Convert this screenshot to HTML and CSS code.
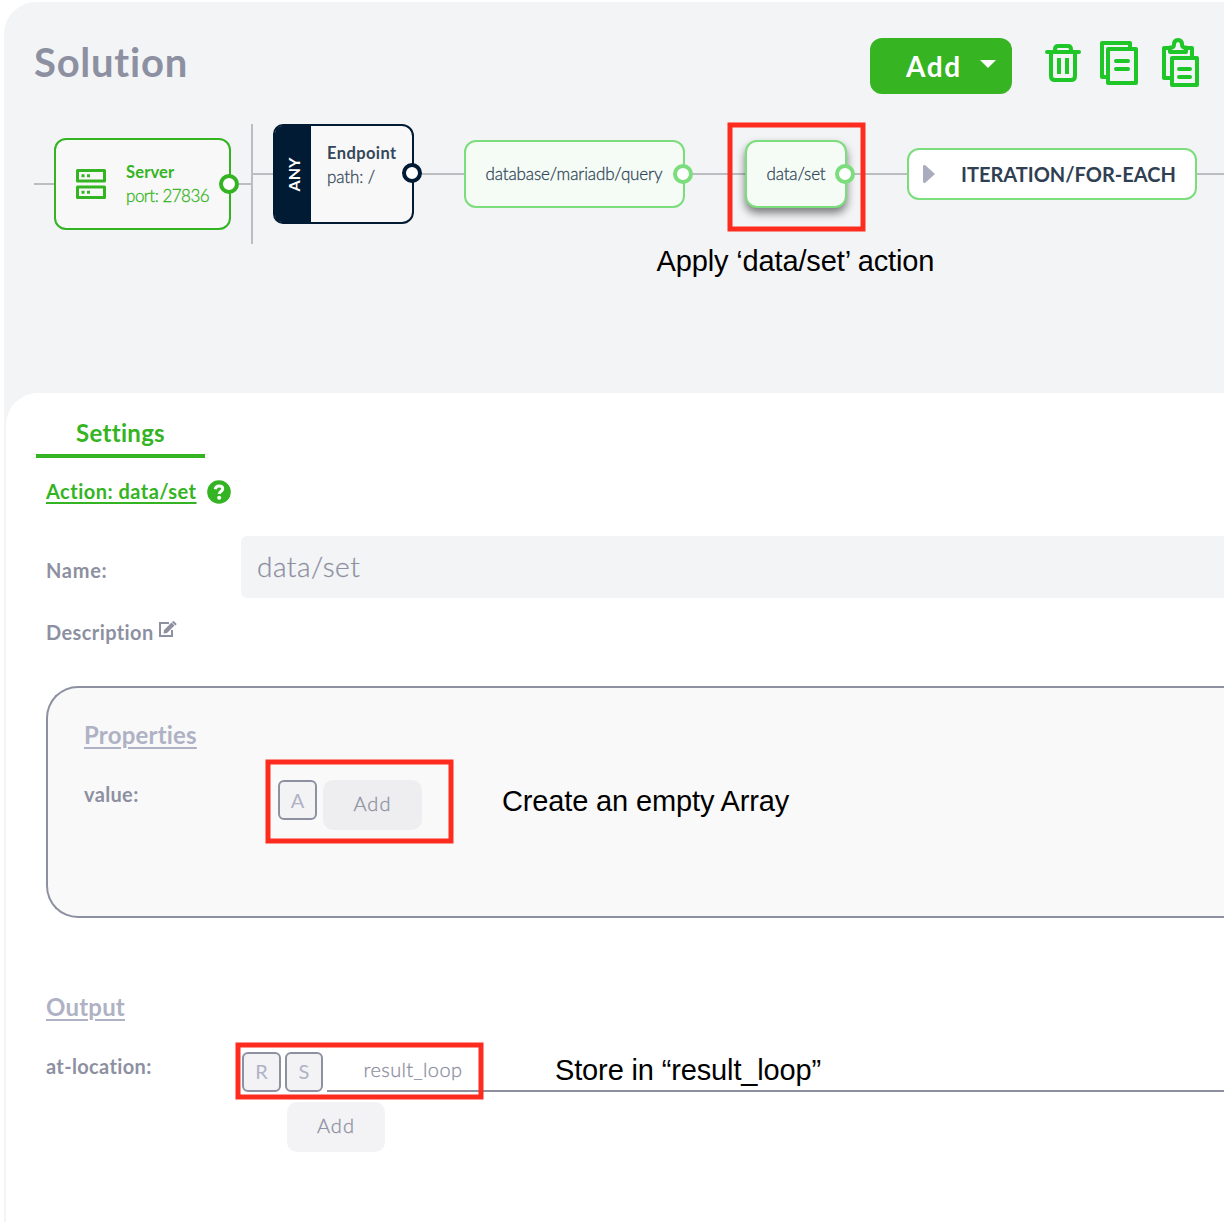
FILE: index.html
```html
<!DOCTYPE html>
<html lang="en">
<head>
<meta charset="utf-8">
<title>Solution</title>
<link rel="stylesheet" href="styles.css">
</head>
<body>
<main class="workspace">
  <header class="topbar">
    <h1 class="title"><span>Solution</span></h1>
    <button class="add-button"><span>Add</span><i class="caret"></i></button>
    <svg class="tool tool-trash" width="36" height="38" viewBox="0 0 36 38" fill="none" stroke="#1fc627" stroke-width="4">
      <path d="M2 8H34" stroke-linecap="round"/><path d="M10 8V5.500Q10 2 13 2H23Q26 2 26 5.500V8M6 8V32Q6 36 10 36H26Q30 36 30 32V8M14 14V30M22 14V30"/>
    </svg>
    <svg class="tool tool-copy" width="38" height="44" viewBox="0 0 38 44" fill="none" stroke="#1fc627" stroke-width="4" stroke-linejoin="round">
      <path d="M8 36H2V2H30V8M8 8H36V42H8Z"/><path d="M16 20H28M16 28H28" stroke-linecap="round"/>
    </svg>
    <svg class="tool tool-paste" width="37" height="49" viewBox="0 0 37 49" fill="none" stroke="#1fc627" stroke-width="4" stroke-linejoin="round">
      <path d="M10 40H2V10H8M24 10H30V19M10 20H35V47H10Z"/><path d="M8 14V9.500H10Q12 9 12 6.500Q12 2 16 2Q20 2 20 6.500Q20 9 22 9.500H24V14Z"/><path d="M17 31H28M17 39H28" stroke-linecap="round"/>
    </svg>
  </header>

  <section class="canvas">
    <i class="wire wire-in"></i><i class="wire wire-server"></i><i class="wire wire-split"></i><i class="wire wire-endpoint"></i><i class="wire wire-main"></i>
    <div class="node node-server">
      <svg width="30" height="30" viewBox="0 0 30 30" fill="none" stroke="#34b422" stroke-width="3"><path d="M1.500 1.500H28.500V12H1.500ZM1.500 18H28.500V28.500H1.500Z" stroke-linejoin="round"/><path d="M5.500 6.750H8.500M11 6.750H14M5.500 23.250H8.500M11 23.250H14"/></svg>
      <div class="node-text"><b><span class="t-server">Server</span></b><span class="t-port">port: 27836</span></div>
      <i class="dot"></i>
    </div>
    <div class="node node-endpoint">
      <div class="method"><span>ANY</span></div>
      <div class="node-text"><b><span class="t-endpoint">Endpoint</span></b><span class="t-path">path: /</span></div>
      <i class="dot"></i>
    </div>
    <div class="node action node-query"><span class="t-query">database/mariadb/query</span><i class="dot"></i></div>
    <div class="node action node-set"><span class="t-set">data/set</span><i class="dot"></i></div>
    <div class="node node-each"><svg width="12" height="18" viewBox="0 0 12 18"><path d="M0 1Q0 0 2 0L12 9L2 18Q0 18 0 17Z" fill="#a9acbd"/></svg><span class="t-each">ITERATION/FOR-EACH</span></div>
    <i class="mark mark-set"></i>
    <p class="note note-apply"><span>Apply ‘data/set’ action</span></p>
  </section>

  <section class="settings">
    <nav class="tabs"><a class="tab"><span>Settings</span></a></nav>
    <div class="row row-action">
      <a class="action-link"><span>Action: data/set</span></a>
      <svg width="24" height="24" viewBox="0 0 24 24"><circle cx="12" cy="12" r="11.800" fill="#34b422"/><path d="M8.300 9.200C8.600 7 10 5.900 12.100 5.900C14.400 5.900 15.700 7.100 15.700 8.800C15.700 11.300 12.300 11.200 12.300 14" fill="none" stroke="#fff" stroke-width="3"/><circle cx="12.200" cy="17.700" r="2" fill="#fff"/></svg>
    </div>
    <div class="row row-name"><label class="label"><span class="t-name">Name:</span></label><div class="field"><span>data/set</span></div></div>
    <div class="row row-desc"><label class="label-inline"><span class="t-desc">Description</span></label>
      <svg width="18" height="16" viewBox="0 0 18 16"><path d="M10 2H1V15H13V9" fill="none" stroke="#8d90a1" stroke-width="2"/><path d="M5 9L12.500 1.500L15.500 4.500L8 12L4.500 12.500ZM13.400.700Q14.200-.400 15.200.400L17 2.200Q18 3 17.200 3.700L16.400 4.400L13 1.200Z" fill="#8d90a1"/></svg>
    </div>
    <div class="properties">
      <h2 class="heading"><span class="t-props">Properties</span></h2>
      <div class="prop-row">
        <label class="label"><span class="t-value">value:</span></label>
        <span class="chip">A</span><button class="small-add"><span>Add</span></button>
        <i class="mark mark-value"></i>
        <p class="note note-create"><span>Create an empty Array</span></p>
      </div>
    </div>
    <div class="output">
      <h2 class="heading"><span class="t-output">Output</span></h2>
      <div class="out-row">
        <label class="label"><span class="t-loc">at-location:</span></label>
        <span class="chip">R</span><span class="chip chip-s">S</span>
        <div class="value-line"><span>result_loop</span></div>
        <i class="mark mark-loc"></i>
        <p class="note note-store"><span>Store in “result_loop”</span></p>
      </div>
      <button class="small-add out-add"><span>Add</span></button>
    </div>
  </section>
</main>
</body>
</html>
```
FILE: styles.css
```css
* { box-sizing: border-box; }
body { margin: 0; padding: 2px 0 0 4px; background: #fff; font-family: Lato, "Open Sans", sans-serif; font-variant-ligatures: none; color: #8d90a1; height: 1222px; overflow: hidden; }
h1, h2, p { margin: 0; font-weight: inherit; }
button { border: 0; font: inherit; padding: 0; }
svg { display: block; flex: none; }
span { white-space: nowrap; }
.workspace { height: 1220px; background: #f3f4f6; border-radius: 32px 0 0 0; overflow: hidden; display: flex; flex-direction: column; }

.topbar { height: 118px; flex: none; display: flex; align-items: flex-start; padding: 36px 25px 0 30px; }
.title { flex: 1; font-size: 40px; line-height: 48px; font-weight: 700; letter-spacing: .75px; }
.add-button { width: 142px; height: 56px; background: #36b422; border-radius: 12px; color: #fff; display: flex; align-items: center; padding-left: 36px; font-size: 28px; font-weight: 700; letter-spacing: 1.600px; }
.caret { margin: -5px 16px 0 auto; border: 8.500px solid transparent; border-top-color: #fff; border-bottom: 0; }
.tool-trash { margin: 6px 0 0 33px; }
.tool-copy { margin: 3px 0 0 19px; }
.tool-paste { margin: 0 0 0 24px; }

.canvas { position: relative; height: 273px; flex: none; }
.wire { position: absolute; background: #bcbdc0; height: 2px; }
.wire-in { left: 30px; top: 63px; width: 20px; }
.wire-server { left: 235px; top: 63px; width: 12px; }
.wire-split { left: 247px; top: 4px; width: 2px; height: 120px; }
.wire-endpoint { left: 249px; top: 53px; width: 20px; }
.wire-main { left: 410px; top: 53px; width: 810px; }
.node { position: absolute; border: 2px solid; border-radius: 12px; background: #f8f8f8; display: flex; align-items: center; }
.dot { position: absolute; width: 20px; height: 20px; border: 4px solid; border-radius: 50%; background: #fff; right: -10px; }
.node-text { display: flex; flex-direction: column; font-size: 17px; line-height: 24px; }
.t-port, .t-path, .t-query, .t-set, .field, .small-add, .value-line { font-weight: 300; -webkit-text-stroke: .3px currentColor; }
.t-port { letter-spacing: -.5px; }
.t-path { letter-spacing: -.1px; }
.t-query { letter-spacing: -.12px; }
.t-set { letter-spacing: -.15px; }
.t-server { font-size: 16.500px; letter-spacing: .15px; }
.t-endpoint { font-size: 16.500px; letter-spacing: .4px; }
.node-server { left: 50px; top: 18px; width: 177px; height: 92px; border-color: #34b422; color: #34b422; padding-left: 20px; }
.node-server .node-text { margin-left: 20px; }
.node-server .dot { top: 34px; }
.node-endpoint { left: 269px; top: 4px; width: 141px; height: 100px; border-color: #021b34; color: #34475a; align-items: stretch; border-radius: 10px 12px 12px 10px; }
.method { width: 36px; background: #021b34; color: #fff; display: flex; align-items: center; justify-content: center; border-radius: 7px 0 0 7px; padding-left: 2px; }
.method span { transform: rotate(-90deg); font-size: 16px; font-weight: 700; }
.node-endpoint .node-text { padding: 15px 0 0 16px; }
.node-endpoint .dot { top: 37px; color: #021b34; }
.action { border-color: #7bdd7c; background: #f5fcf6; height: 68px; top: 20px; padding: 0 0 2px 19.500px; font-size: 17px; color: #34475a; }
.action .dot { color: #7bdd7c; top: 22px; }
.node-query { left: 460px; width: 221px; }
.node-set { left: 741px; width: 102px; box-shadow: 0 5px 9px rgba(0, 0, 0, .5); }
.node-each { left: 903px; top: 28px; width: 290px; height: 52px; border-color: #7bdd7c; background: #fff; padding-left: 14px; color: #2f4052; font-size: 20px; font-weight: 700; }
.t-each { margin-left: 26px; }
.mark { position: absolute; border: 5px solid #fd2c1e; pointer-events: none; transform: translate(.5px, .5px); }
.mark-set { left: 723px; top: 2px; width: 138px; height: 109px; }
.note { position: absolute; font: 29px/34px "Liberation Sans", Arial, sans-serif; letter-spacing: -.14px; color: #000; white-space: nowrap; }
.note-apply { left: 652.500px; top: 124px; }

.settings { flex: 1; margin-left: 2px; background: #fff; border-radius: 32px 0 0 0; padding-left: 40px; }
.tabs { height: 65px; margin-left: -10px; display: flex; align-items: flex-end; }
.tab { width: 169px; height: 41px; border-bottom: 4px solid #34b422; color: #34b422; font-size: 24px; line-height: 32px; font-weight: 700; text-align: center; letter-spacing: .3px; }
.row { display: flex; align-items: center; }
.row-action { height: 68px; gap: 10px; color: #34b422; }
.action-link { font-size: 20px; font-weight: 700; letter-spacing: .48px; margin-top: -2px; text-decoration: underline; text-underline-offset: 3px; text-decoration-thickness: 2px; text-decoration-skip-ink: none; }
.label { width: 195px; font-size: 20px; line-height: 24px; font-weight: 700; flex: none; letter-spacing: .35px; }
.row-name { height: 62px; margin-top: 10px; }
.row-name .label { padding-top: 5px; letter-spacing: .7px; }
.field { flex: 1; height: 62px; background: #f3f4f6; border-radius: 6px 0 0 6px; padding: 0 16px; font-size: 28px; line-height: 61px; letter-spacing: .5px; }
.row-desc { height: 68px; gap: 5px; }
.label-inline { font-size: 20px; font-weight: 700; letter-spacing: .4px; margin-top: -1px; }
.row-desc svg { margin-top: -6px; }
.properties { margin-top: 20px; height: 232px; border: 2px solid #8d90a1; border-right: 0; border-radius: 32px 0 0 32px; background: #f9f9f9; padding: 32px 0 0 36px; }
.heading { font-size: 24px; line-height: 30px; font-weight: 700; color: #afb2c4; letter-spacing: .2px; text-decoration: underline; text-decoration-thickness: 2px; text-underline-offset: 3px; }
.prop-row { position: relative; display: flex; align-items: flex-start; margin-top: 30px; }
.prop-row .label { width: 194px; padding-top: 2px; }
.chip { width: 39px; height: 40px; border: 2px solid #8d90a1; border-radius: 6px; background: #f3f3f6; color: #afb2c4; font-size: 20px; line-height: 36px; text-align: center; flex: none; }
.out-row .chip { line-height: 35px; }
.small-add { width: 99px; height: 50px; border-radius: 10px; background: #eeeef0; color: #8d90a1; font-size: 20px; line-height: 45px; padding-bottom: 4px; letter-spacing: 1.100px; margin-left: 6px; }
.mark-value { left: 181px; top: -21px; width: 188px; height: 84px; }
.note-create { left: 418px; top: 4px; }
.output { padding-top: 74px; }
.out-row { position: relative; display: flex; margin-top: 30px; height: 40px; }
.out-row .label { width: 196px; padding-top: 2px; }
.chip-s { width: 38px; margin-left: 4px; }
.value-line { flex: 1; margin-left: 4px; border-bottom: 2px solid #8d90a1; padding-left: 36.500px; font-size: 20px; line-height: 35px; letter-spacing: .4px; }
.out-add { margin: 10px 0 0 241px; width: 98px; background: #f3f3f5; display: block; }
.mark-loc { left: 189px; top: -10px; width: 248px; height: 57px; }
.note-store { left: 509px; top: 1px; }
```
